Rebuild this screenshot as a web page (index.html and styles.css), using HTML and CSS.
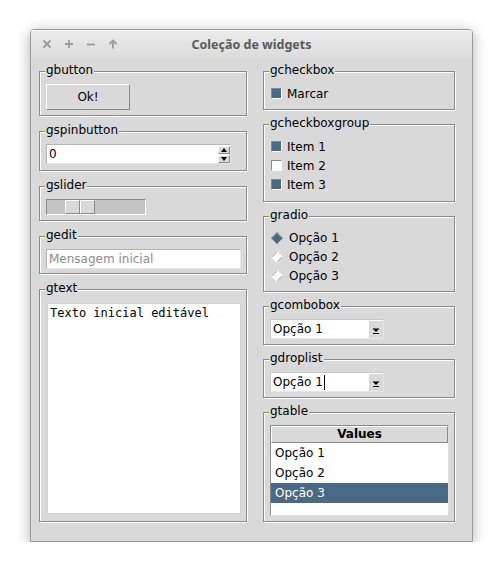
FILE: index.html
```html
<!DOCTYPE html>
<html lang="pt">
<head>
<meta charset="utf-8">
<title>Coleção de widgets</title>
<link rel="stylesheet" href="styles.css">
</head>
<body>
<div class="window">
  <div class="titlebar">
    <div class="controls">
      <svg class="ctl" width="10" height="10" viewBox="0 0 10 10"><path d="M1.5 1.5L8.5 8.5M8.5 1.5L1.5 8.5"/></svg>
      <svg class="ctl" width="10" height="10" viewBox="0 0 10 10"><path d="M5 1V9M1 5H9"/></svg>
      <svg class="ctl" width="10" height="10" viewBox="0 0 10 10"><path d="M1 5.5H9"/></svg>
      <svg class="ctl" width="10" height="10" viewBox="0 0 10 10"><path d="M5 2.5V9.5M1.5 5L5 1.5L8.5 5"/></svg>
    </div>
    <div class="title">Coleção de widgets</div>
    <div></div>
  </div>
  <div class="content">
    <div class="col col-left">
      <div class="frame f-button">
        <span class="legend">gbutton</span>
        <div class="btn">Ok!</div>
      </div>
      <div class="frame f-spin">
        <span class="legend">gspinbutton</span>
        <div class="entry spin">
          <span class="val">0</span>
          <div class="arrows">
            <span class="arr"><svg width="6" height="4" viewBox="0 0 6 4"><path d="M0 4L3 0L6 4Z"/></svg></span>
            <span class="arr"><svg width="6" height="4" viewBox="0 0 6 4"><path d="M0 0L3 4L6 0Z"/></svg></span>
          </div>
        </div>
      </div>
      <div class="frame f-slider">
        <span class="legend">gslider</span>
        <div class="trough"><span class="handle first"></span><span class="handle"></span></div>
      </div>
      <div class="frame f-edit">
        <span class="legend">gedit</span>
        <div class="entry edit"><span class="placeholder">Mensagem inicial</span></div>
      </div>
      <div class="frame f-text">
        <span class="legend">gtext</span>
        <div class="textarea">Texto inicial editável</div>
      </div>
    </div>
    <div class="col col-right">
      <div class="frame f-check">
        <span class="legend">gcheckbox</span>
        <div class="row"><span class="cb on"></span>Marcar</div>
      </div>
      <div class="frame f-group">
        <span class="legend">gcheckboxgroup</span>
        <div class="row"><span class="cb on"></span>Item 1</div>
        <div class="row"><span class="cb"></span>Item 2</div>
        <div class="row"><span class="cb on"></span>Item 3</div>
      </div>
      <div class="frame f-radio">
        <span class="legend">gradio</span>
        <div class="row"><span class="rb on"></span>Opção 1</div>
        <div class="row"><span class="rb"></span>Opção 2</div>
        <div class="row"><span class="rb"></span>Opção 3</div>
      </div>
      <div class="frame f-combo">
        <span class="legend">gcombobox</span>
        <div class="combo"><span class="cval">Opção 1</span><span class="cbtn"><svg width="8" height="6" viewBox="0 0 8 6"><path d="M0.5 0.5H7.5L4 4Z"/><path d="M1 5.5H7" class="bar"/></svg></span></div>
      </div>
      <div class="frame f-drop">
        <span class="legend">gdroplist</span>
        <div class="combo"><span class="cval">Opção 1<span class="caret"></span></span><span class="cbtn"><svg width="8" height="6" viewBox="0 0 8 6"><path d="M0.5 0.5H7.5L4 4Z"/><path d="M1 5.5H7" class="bar"/></svg></span></div>
      </div>
      <div class="frame f-table">
        <span class="legend">gtable</span>
        <div class="table">
          <div class="thead">Values</div>
          <div class="tr">Opção 1</div>
          <div class="tr">Opção 2</div>
          <div class="tr sel">Opção 3</div>
        </div>
      </div>
    </div>
  </div>
</div>
</body>
</html>
```
FILE: styles.css
```css
html, body {
  margin: 0;
  padding: 0;
  background: #ffffff;
}
body {
  font-family: "DejaVu Sans", sans-serif;
  font-size: 12px;
  color: #000;
  padding: 29px 0 0 30px;
}
.window {
  box-sizing: border-box;
  width: 443px;
  height: 513px;
  border: 1px solid #9a9a9a;
  border-radius: 4px 4px 0 0;
  background: #d9d9d9;
  box-shadow: 0 3px 14px rgba(0, 0, 0, 0.32);
  display: flex;
  flex-direction: column;
}
.titlebar {
  height: 28px;
  flex: none;
  display: grid;
  grid-template-columns: 1fr auto 1fr;
  align-items: center;
  background: linear-gradient(#ececec, #dcdcdc);
  border-radius: 3px 3px 0 0;
  box-shadow: inset 0 1px 0 #f6f6f6;
}
.controls {
  display: flex;
  gap: 12px;
  padding-left: 11px;
  padding-top: 0;
}
.ctl path {
  stroke: #9b9b9b;
  stroke-width: 1.8;
  fill: none;
}
.title {
  font-family: "Noto Sans", "DejaVu Sans", sans-serif;
  font-weight: bold;
  font-size: 12.5px;
  color: #5a5a5a;
}
.content {
  display: flex;
  gap: 16px;
  padding: 13px 0 0 8px;
}
.col {
  display: flex;
  flex-direction: column;
}
.col-left {
  width: 208px;
  gap: 15px;
}
.col-right {
  width: 192px;
  gap: 14px;
}
.frame {
  position: relative;
  box-sizing: border-box;
  border: 1px solid #8a8a8a;
  box-shadow: inset 1px 1px 0 #ffffff, 1px 1px 0 #ffffff;
  padding: 12px 6px 0 6px;
}
.legend {
  position: absolute;
  top: -9px;
  left: 5px;
  padding: 0 1px;
  line-height: 14px;
  background: #d9d9d9;
  white-space: nowrap;
}
.f-button { height: 45px; }
.f-spin { height: 40px; }
.f-slider { height: 35px; }
.f-edit { height: 38px; }
.f-text { height: 233px; padding: 13px 5px 0 7px; }

.btn {
  box-sizing: border-box;
  width: 84px;
  height: 26px;
  border: 1px solid;
  border-color: #ffffff #8a8a8a #8a8a8a #ffffff;
  display: flex;
  align-items: center;
  justify-content: center;
}
.entry {
  box-sizing: border-box;
  height: 20px;
  background: #fff;
  border: 1px solid;
  border-color: #b5b5b5 #e6e6e6 #e6e6e6 #b5b5b5;
  display: flex;
  align-items: center;
  padding-left: 2px;
}
.spin {
  width: 185px;
  justify-content: space-between;
  padding-right: 0;
}
.arrows {
  display: flex;
  flex-direction: column;
  gap: 1px;
  margin-right: 0;
}
.arr {
  box-sizing: border-box;
  width: 12px;
  height: 8px;
  background: #d9d9d9;
  border: 1px solid;
  border-color: #ffffff #8a8a8a #8a8a8a #ffffff;
  display: flex;
  align-items: center;
  justify-content: center;
}
.arr path { fill: #000; }
.edit { width: 195px; }
.placeholder { color: #8c8c8c; }
.trough {
  box-sizing: border-box;
  width: 100px;
  height: 16px;
  background: #c3c3c3;
  border: 1px solid;
  border-color: #8a8a8a #ffffff #ffffff #8a8a8a;
  display: flex;
}
.handle {
  box-sizing: border-box;
  width: 15px;
  height: 14px;
  background: #d9d9d9;
  border: 1px solid;
  border-color: #ffffff #8a8a8a #8a8a8a #ffffff;
}
.handle.first { margin-left: 18px; }
.textarea {
  box-sizing: border-box;
  width: 194px;
  height: 211px;
  background: #fff;
  border: 1px solid #d0d0d0;
  font-family: "DejaVu Sans Mono", monospace;
  font-size: 12px;
  padding: 2px 0 0 2px;
  line-height: 15px;
}

.f-check { height: 39px; }
.f-group { height: 78px; padding-top: 12px; }
.f-radio { height: 76px; padding-top: 11px; }
.f-combo { height: 39px; }
.f-drop { height: 39px; }
.f-table { height: 110px; }
.row {
  display: flex;
  align-items: center;
  height: 19px;
  padding-left: 1px;
}
.cb {
  box-sizing: border-box;
  width: 11px;
  height: 11px;
  margin-right: 5px;
  background: #fff;
  border: 1px solid;
  border-color: #8a8a8a #ffffff #ffffff #8a8a8a;
}
.cb.on { background: #4a6984; }
.rb {
  box-sizing: border-box;
  width: 8px;
  height: 8px;
  margin: 0 8px 0 2px;
  background: #fff;
  transform: rotate(45deg);
  border: 1px solid;
  border-color: #ffffff #b4b4b4 #ffffff #b4b4b4;
}
.rb.on { background: #4a6984; border-color: #8a8a8a #4a6984 #4a6984 #8a8a8a; }
.combo {
  box-sizing: border-box;
  width: 114px;
  height: 20px;
  background: #fff;
  border: 1px solid;
  border-color: #c8c8c8 #e6e6e6 #e6e6e6 #c8c8c8;
  display: flex;
  justify-content: space-between;
  align-items: stretch;
}
.cval {
  display: flex;
  align-items: center;
  padding-left: 2px;
}
.caret {
  display: inline-block;
  width: 1px;
  height: 15px;
  background: #000;
  margin-left: 1px;
}
.cbtn {
  box-sizing: border-box;
  width: 15px;
  background: #d9d9d9;
  border: 1px solid;
  border-color: #ffffff #d9d9d9 #d9d9d9 #ffffff;
  display: flex;
  align-items: flex-end;
  justify-content: center;
  padding-bottom: 3px;
}
.cbtn path { fill: #000; }
.cbtn .bar { stroke: #000; stroke-width: 1; fill: none; }
.table {
  box-sizing: border-box;
  width: 179px;
  height: 91px;
  background: #fff;
  border: 1px solid;
  border-color: #8a8a8a #dcdcdc #dcdcdc #8a8a8a;
}
.thead {
  box-sizing: border-box;
  height: 17px;
  background: #d9d9d9;
  border: 1px solid;
  border-color: #ffffff #8a8a8a #8a8a8a #ffffff;
  font-weight: bold;
  text-align: center;
  line-height: 15px;
}
.tr {
  height: 20px;
  line-height: 20px;
  padding-left: 4px;
}
.tr.sel {
  background: #4a6984;
  color: #ffffff;
}
```
